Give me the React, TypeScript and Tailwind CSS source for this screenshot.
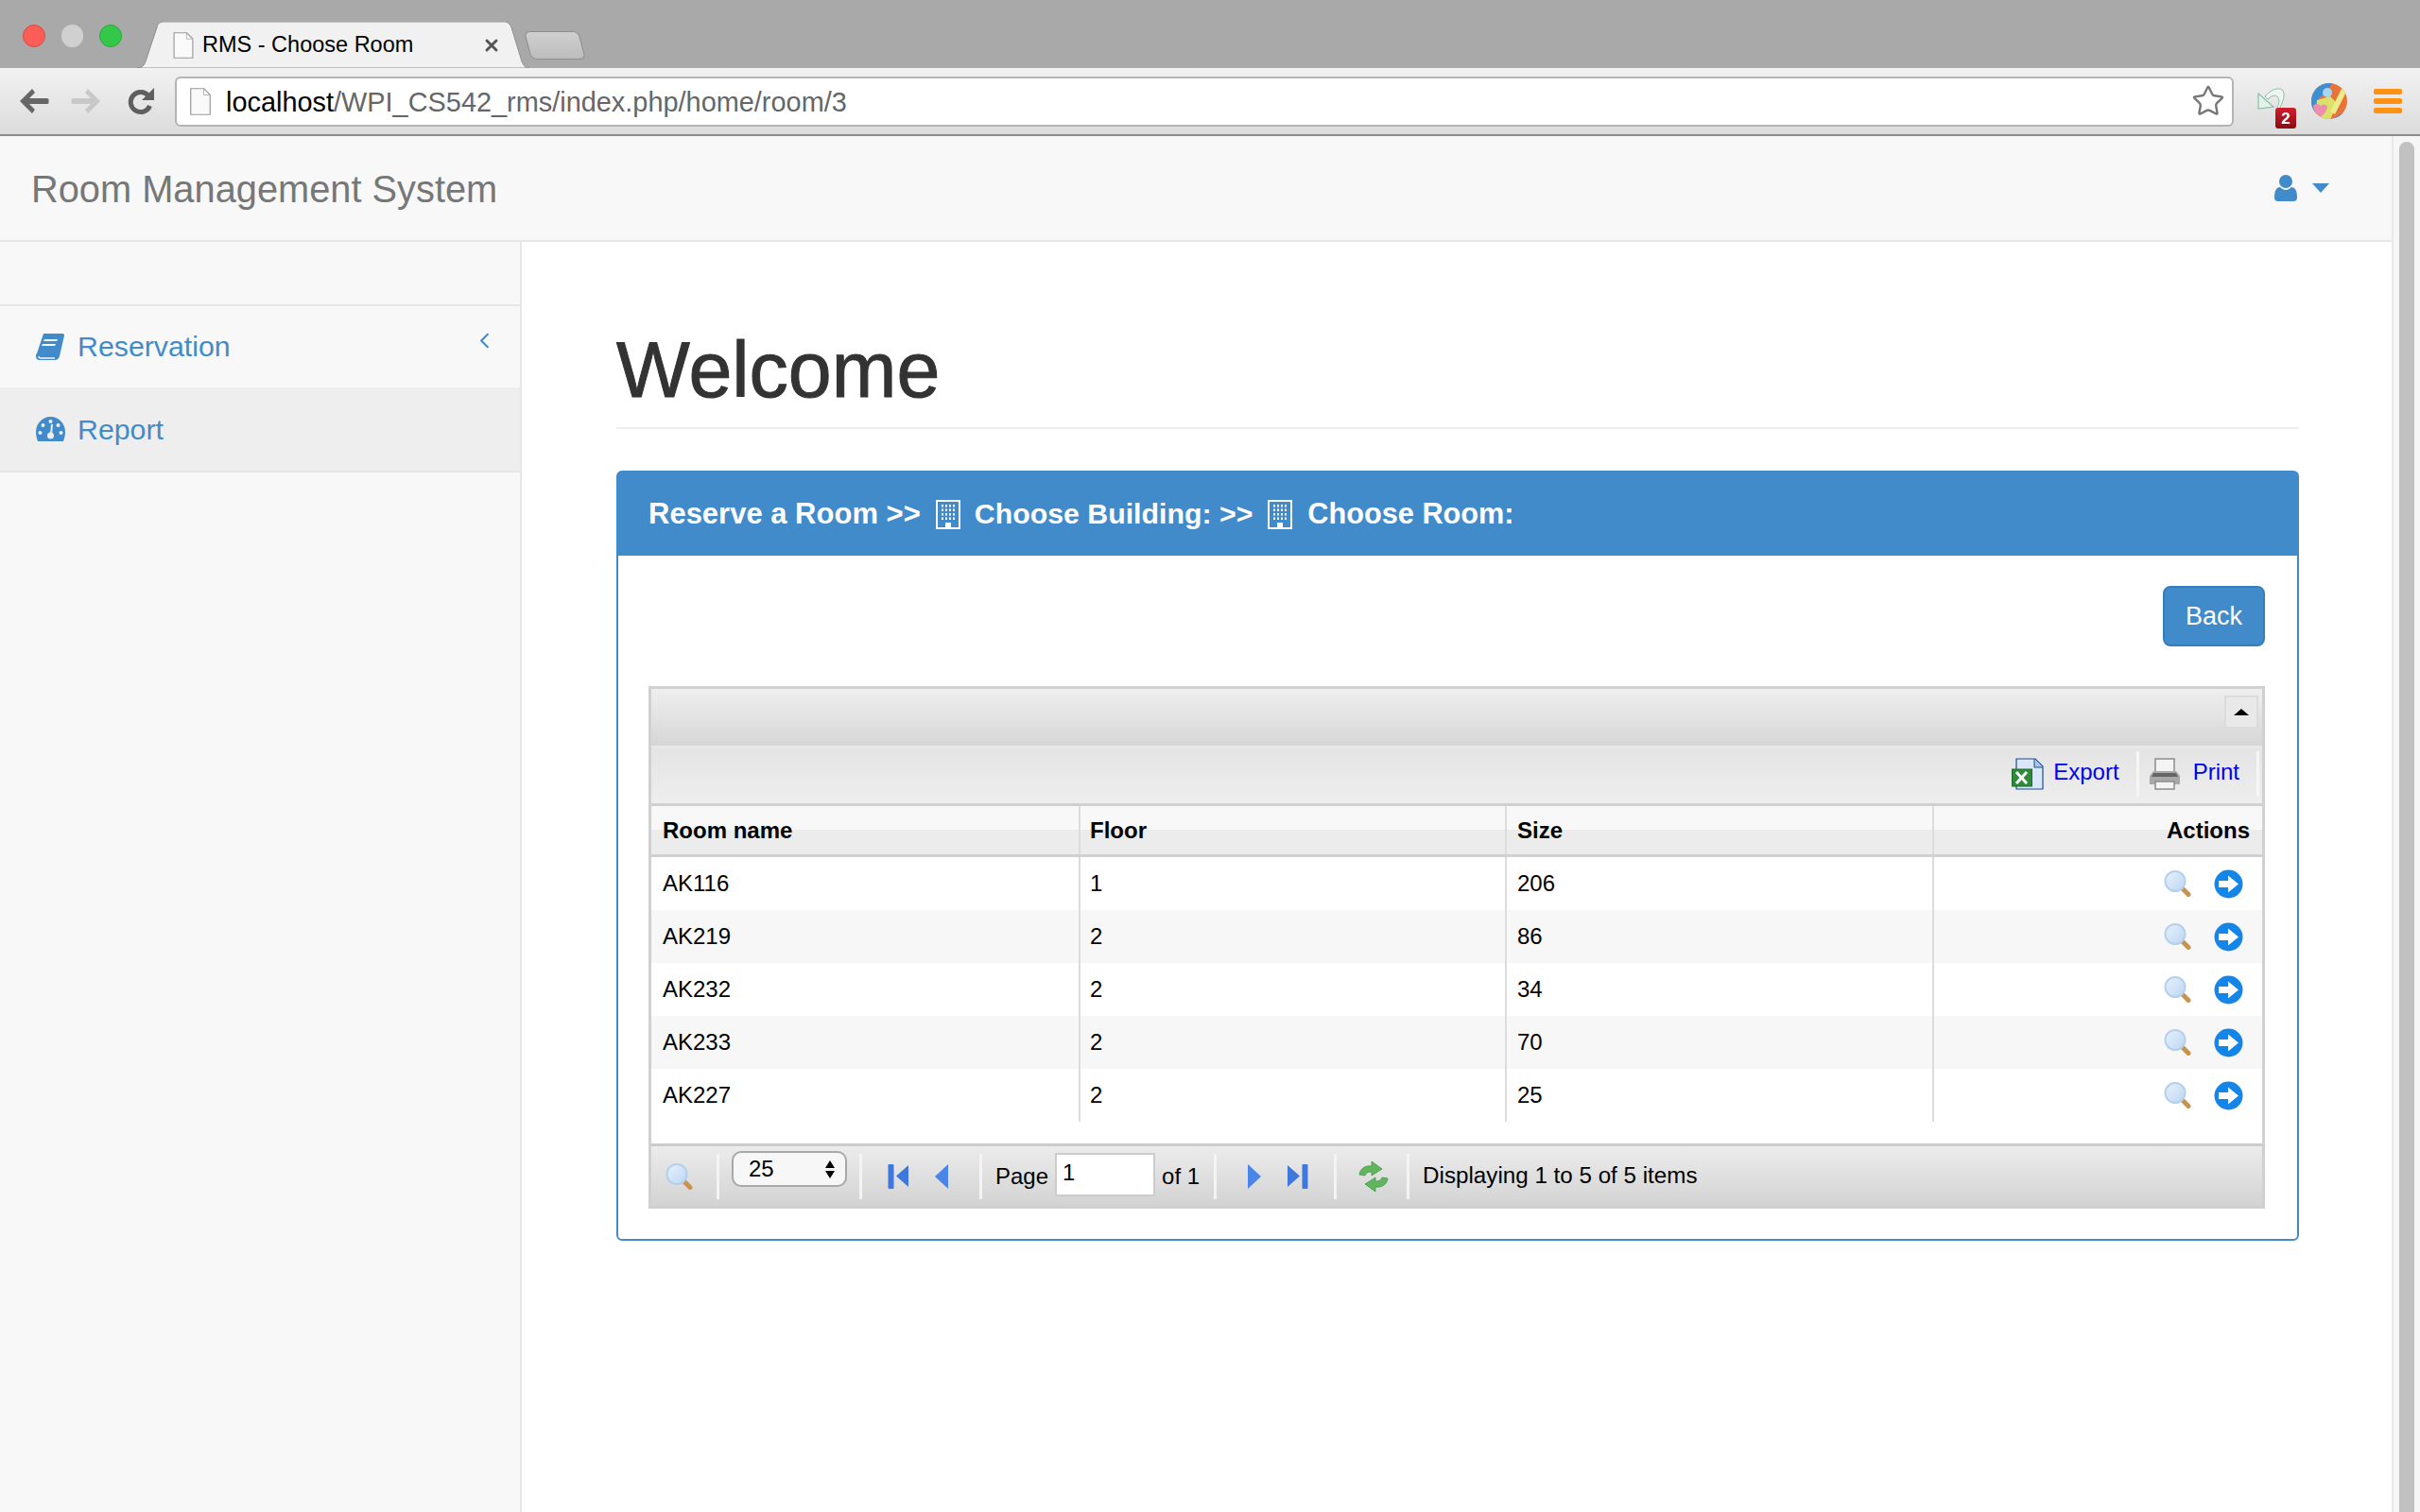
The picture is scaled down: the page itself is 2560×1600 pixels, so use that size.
import { ChevronLeft, Star, X } from 'lucide-react';

const rooms = [
  { name: 'AK116', floor: '1', size: '206' },
  { name: 'AK219', floor: '2', size: '86' },
  { name: 'AK232', floor: '2', size: '34' },
  { name: 'AK233', floor: '2', size: '70' },
  { name: 'AK227', floor: '2', size: '25' },
];

function FileIcon({ className }: { className: string }) {
  return (
    <svg className={className} viewBox="0 0 22 29" fill="none">
      <path d="M.75.75h14l6.5 6.5v21H.75z" fill="#fafafa" stroke="#9a9a9a" strokeWidth="1.2" />
      <path d="M14.5 1v6.5H21" stroke="#b5b5b5" strokeWidth="1" />
    </svg>
  );
}

function NavArrow({ flip, color }: { flip?: boolean; color: string }) {
  return (
    <svg className={`h-[28px] w-[32px] ${flip ? 'scale-x-[-1]' : ''}`} viewBox="0 0 32 28">
      <path d="M14 1 1 14l13 13 3-4-6-6h19a1.5 1.5 0 0 0 1.5-1.5v-3A1.5 1.5 0 0 0 30 11H11l6-6z" fill={color} />
    </svg>
  );
}

function ReloadIcon() {
  return (
    <svg className="h-[30px] w-[29px]" viewBox="0 0 29 30" fill="none">
      <path d="M22 9.500A10.500 10.500 0 1 0 23.500 20" stroke="#5f5f5f" strokeWidth="5" />
      <path d="M28 1v13H15z" fill="#5f5f5f" />
    </svg>
  );
}

function MailBadge() {
  return (
    <div className="relative h-[44px] w-[44px]">
      <svg className="absolute top-[1px] left-0 h-[27px] w-[30px]" viewBox="0 0 30 27" fill="none">
        <path d="M8 9C14 2 22-1 26 2c4 3 2 12-4 22l-2-1c3-6 4-11 1-14-3-2-7 0-10 3z" fill="#eef6f1" stroke="#8dbfa8" strokeWidth="1" />
        <path d="M1 6 17 20 1 22z" fill="#e2f3ea" stroke="#8dbfa8" strokeWidth="1.2" />
      </svg>
      <div className="absolute top-[22px] left-[19px] flex h-[22px] w-[22px] items-center justify-center rounded-[3px] bg-gradient-to-b from-[#d0202c] to-[#8d0a14] text-[17px] leading-none font-bold text-white">
        2
      </div>
    </div>
  );
}

function ColorBall() {
  return (
    <svg className="h-[38px] w-[38px]" viewBox="0 0 38 38">
      <defs>
        <clipPath id="ball"><circle cx="19" cy="19" r="19" /></clipPath>
      </defs>
      <g clipPath="url(#ball)">
        <rect width="38" height="38" fill="#e9743a" />
        <path d="M0 0h22L16 10 8 16 4 38H0z" fill="#3f8fd0" />
        <path d="M6 18 20 14l8 8-8 16H4z" fill="#dbe26a" />
        <path d="M20 30 32 6l5 3-12 24z" fill="#ecec8a" />
        <circle cx="17" cy="10" r="5" fill="#a9d5f2" />
        <path d="M2 24c3-3 6-2 8 0 2-2 6-2 7 1 0 5-5 9-8 12-3-3-7-8-7-13z" fill="#ec8fae" />
        <path d="M24 37 36 30v8z" fill="#3f8fd0" />
      </g>
    </svg>
  );
}

function Magnifier() {
  return (
    <svg className="h-[28px] w-[29px]" viewBox="0 0 29 28">
      <defs>
        <linearGradient id="lens" x1="0" y1="0" x2="1" y2="1">
          <stop offset="0" stopColor="#e8f2fc" />
          <stop offset="1" stopColor="#bcd6f2" />
        </linearGradient>
      </defs>
      <path d="m20 19.500 6 6" stroke="#c8924f" strokeWidth="5" strokeLinecap="round" />
      <circle cx="12" cy="11.500" r="10.500" fill="url(#lens)" stroke="#b4d0ee" strokeWidth="2" />
    </svg>
  );
}

function GoArrow() {
  return (
    <svg className="h-[31px] w-[31px]" viewBox="0 0 31 31">
      <circle cx="15.500" cy="15.500" r="15" fill="#1585e8" />
      <path d="M5 12h10V6.500L26 15.500 15 24.500V19H5z" fill="#fff" />
    </svg>
  );
}

function ExcelIcon() {
  return (
    <svg className="h-[34px] w-[34px]" viewBox="0 0 34 34">
      <path d="M5 1h20l8 8v24H5z" fill="#d9e7f8" stroke="#1f4e8c" strokeWidth="1.2" />
      <path d="M24 1v9h9" fill="#a9c6ea" stroke="#1f4e8c" strokeWidth="1" />
      <rect x="0.500" y="12" width="21" height="18" fill="#2f8a3c" stroke="#1d6b2b" />
      <path d="M5 15 16 27M16 15 5 27" stroke="#fff" strokeWidth="3" />
    </svg>
  );
}

function PrinterIcon() {
  return (
    <svg className="h-[34px] w-[34px]" viewBox="0 0 34 34">
      <rect x="7" y="1" width="20" height="14" fill="#f4f4f4" stroke="#8c8c8c" strokeWidth="1.5" />
      <path d="M5 14h24l4 5v9H1v-9z" fill="#a8a8a8" />
      <path d="M5 16h24l2 4H3z" fill="#666" />
      <rect x="7" y="25" width="20" height="8" fill="#f4f4f4" stroke="#8c8c8c" strokeWidth="1.5" />
    </svg>
  );
}

function BuildingIcon() {
  const dots = [0, 1, 2, 3];
  return (
    <svg className="h-[31px] w-[26px]" viewBox="0 0 26 31">
      <path d="M1 1h24v29H1z" fill="none" stroke="#fff" strokeWidth="2" />
      {dots.map((r) =>
        dots.map((c) => <rect key={`${r}-${c}`} x={6 + c * 4} y={5 + r * 4.5} width="2" height="2.5" fill="#fff" />),
      )}
      <path d="M10 30v-6h6v6z" fill="#fff" />
    </svg>
  );
}

function FirstIcon({ flip }: { flip?: boolean }) {
  return (
    <svg className={`h-[28px] w-[23px] ${flip ? 'scale-x-[-1]' : ''}`} viewBox="0 0 23 28">
      <rect x="0.500" y="1" width="6" height="26" rx="1" fill="#3f78dd" />
      <path d="M22 2v23L9 13.500z" fill="#3f78dd" />
    </svg>
  );
}

function PrevIcon({ flip }: { flip?: boolean }) {
  return (
    <svg className={`h-[26px] w-[14px] ${flip ? 'scale-x-[-1]' : ''}`} viewBox="0 0 14 26">
      <path d="M14 0v26L0 13z" fill="#4a86e8" />
    </svg>
  );
}

function RefreshIcon() {
  return (
    <svg className="h-[34px] w-[34px]" viewBox="0 0 34 34">
      <path d="M2 15C3 8 9 5 15 6V1l11 8-11 7v-4c-4 0-6 1-7 4z" fill="#62b45f" stroke="#3f9a45" strokeWidth="0.800" />
      <path d="M32 19c-1 7-7 10-13 9v5L8 25l11-7v4c4 0 6-1 7-4z" fill="#62b45f" stroke="#3f9a45" strokeWidth="0.800" />
    </svg>
  );
}

function PagerSep() {
  return <div className="h-[48px] w-[3px] shrink-0 bg-[#f4f4f4]" />;
}

function BrowserChrome() {
  return (
    <div className="shrink-0">
      {/* tab strip */}
      <div className="relative flex h-[72px] items-start bg-[#a9a9a9]">
        <div className="mt-[26px] ml-[24px] h-[24px] w-[24px] rounded-full border border-[#d94a42] bg-[#fc5d57]" />
        <div className="mt-[26px] ml-[17px] h-[24px] w-[23px] rounded-full bg-[#d0d0d0]" />
        <div className="mt-[26px] ml-[17px] h-[24px] w-[24px] rounded-full border border-[#2aa83c] bg-[#34c84a]" />
        <div className="relative mt-[23px] ml-[16px] flex h-[49px] w-[415px] items-center">
          <svg className="absolute inset-0 h-full w-full" viewBox="0 0 415 49" fill="none">
            <path d="M0 49c5 0 7-2 9-7L21 6c1-4 3-6 8-6h359c4 0 6 2 8 6l11 36c2 5 4 7 8 7z" fill="#f1f1f1" stroke="#8f8f8f" />
          </svg>
          <FileIcon className="relative ml-[38px] h-[28px] w-[22px]" />
          <span className="relative mt-[1px] ml-[9px] text-[23.5px] leading-none text-black">RMS - Choose Room</span>
          <X className="absolute top-[15px] left-[365px] h-[20px] w-[20px] text-[#555]" strokeWidth={3.5} />
        </div>
        <div className="mt-[33px] -ml-[2px] h-[30px] w-[58px] skew-x-[15deg] rounded-[6px] border border-[#8f8f8f] bg-gradient-to-b from-[#cfcfcf] to-[#bdbdbd]" />
      </div>

      {/* toolbar */}
      <div className="flex h-[72px] items-center border-b-2 border-[#8c8c8c] bg-gradient-to-b from-[#f2f2f2] to-[#dcdcdc]">
        <div className="ml-[20px]"><NavArrow color="#666" /></div>
        <div className="ml-[23px]"><NavArrow flip color="#c8c8c8" /></div>
        <div className="ml-[28px]"><ReloadIcon /></div>
        <div className="ml-[21px] flex h-[53px] w-[2178px] items-center rounded-[6px] border-2 border-[#b4b4b4] bg-white">
          <FileIcon className="ml-[14px] h-[29px] w-[22px]" />
          <span className="mt-[2px] ml-[16px] text-[28.9px] leading-none text-[#666]">
            <span className="text-black">localhost</span>/WPI_CS542_rms/index.php/home/room/3
          </span>
          <Star className="mr-[7px] ml-auto h-[36px] w-[36px] text-[#777]" strokeWidth={1.6} />
        </div>
        <div className="mt-[14px] ml-[25px]"><MailBadge /></div>
        <div className="ml-[13px]"><ColorBall /></div>
        <div className="ml-[28px] flex w-[30px] flex-col gap-[4px]">
          <div className="h-[6px] rounded-[2px] bg-[#ff9112]" />
          <div className="h-[6px] rounded-[2px] bg-[#ff9112]" />
          <div className="h-[6px] rounded-[2px] bg-[#ff9112]" />
        </div>
      </div>
    </div>
  );
}

function Navbar() {
  return (
    <div className="flex h-[112px] shrink-0 items-center border-b-2 border-[#e7e7e7] bg-[#f8f8f8]">
      <span className="mt-[3px] ml-[33px] text-[39.8px] leading-none text-[#777]">Room Management System</span>
      <svg className="ml-auto h-[28px] w-[24px]" viewBox="0 0 24 28">
        <circle cx="12" cy="7" r="7" fill="#428bca" />
        <path d="M0 24c0-7 2-11 6-11 2 2 4 3 6 3s4-1 6-3c4 0 6 4 6 11 0 2-1 4-4 4H4c-3 0-4-2-4-4z" fill="#428bca" />
      </svg>
      <div className="mr-[66px] ml-[16px] h-0 w-0 border-x-[9px] border-t-[10px] border-x-transparent border-t-[#428bca]" />
    </div>
  );
}

function Sidebar() {
  return (
    <div className="w-[552px] shrink-0 border-r-2 border-[#e7e7e7] bg-[#f8f8f8] pt-[66px]">
      <div className="flex h-[88px] items-center border-t-2 border-[#e7e7e7] text-[#428bca]">
        <svg className="ml-[38px] h-[28px] w-[30px]" viewBox="0 0 30 28">
          <path d="M8 0h20c2 0 2 1 2 2l-5 22c-1 2-2 4-5 4H4c-3 0-4-2-4-4 0-1 0-2 1-3zM9 6l-1 2h14l1-2zM7 11l-1 2h14l1-2z" fill="#428bca" fillRule="evenodd" />
          <path d="M3 24c0 1 1 2 2 2h15" stroke="#f8f8f8" strokeWidth="1.5" fill="none" />
        </svg>
        <span className="mt-[1px] ml-[14px] text-[30.3px] leading-none">Reservation</span>
        <ChevronLeft className="mr-[24px] mb-[14px] ml-auto h-[27px] w-[27px]" strokeWidth={1.8} />
      </div>
      <div className="flex h-[90px] items-center border-b-2 border-[#e7e7e7] bg-[#eeeeee] text-[#428bca]">
        <svg className="ml-[38px] h-[26px] w-[31px]" viewBox="0 0 31 26">
          <path d="M15.500 0C7 0 0 7 0 16c0 4 1 7 2 10h27c1-3 2-6 2-10C31 7 24 0 15.500 0z" fill="#428bca" />
          <circle cx="15.500" cy="5" r="2" fill="#eee" />
          <circle cx="7.500" cy="9" r="2" fill="#eee" />
          <circle cx="23.500" cy="9" r="2" fill="#eee" />
          <circle cx="4.500" cy="17" r="2" fill="#eee" />
          <circle cx="26.500" cy="17" r="2" fill="#eee" />
          <path d="M17 8l-1 11" stroke="#eee" strokeWidth="2" />
          <circle cx="15.500" cy="20" r="3.500" fill="#eee" />
        </svg>
        <span className="mt-[2px] ml-[13px] text-[30.3px] leading-none">Report</span>
      </div>
    </div>
  );
}

function RoomGrid() {
  return (
    <div className="flex h-[553px] flex-col border-[3px] border-[#d0d0d0]">
      {/* title bar */}
      <div className="flex h-[63px] shrink-0 items-start justify-end border-b-[3px] border-[#e8e8e8] bg-gradient-to-b from-[#efefef] to-[#d6d6d6] pt-[7px] pr-[4px]">
        <div className="flex h-[35px] w-[36px] items-center justify-center border-2 border-[#dcdcdc] bg-[#e9e9e9]">
          <div className="h-0 w-0 border-x-[8px] border-b-[7px] border-x-transparent border-b-black" />
        </div>
      </div>

      {/* toolbar */}
      <div className="flex h-[61px] shrink-0 items-center justify-end border-b-[3px] border-[#d0d0d0] bg-gradient-to-b from-[#e4e4e4] to-[#eeeeee] pr-[3px] pb-[4px]">
        <ExcelIcon />
        <span className="mb-[4px] ml-[10px] text-[24px] leading-none text-[#0000ee]">Export</span>
        <div className="ml-[18px] h-[48px] w-[3px] bg-[#f6f6f6]" />
        <div className="ml-[10px]"><PrinterIcon /></div>
        <span className="mb-[4px] ml-[13px] text-[24px] leading-none text-[#0000ee]">Print</span>
        <div className="ml-[18px] h-[48px] w-[3px] bg-[#f6f6f6]" />
      </div>

      {/* column headers */}
      <div className="grid h-[54px] shrink-0 grid-cols-[454px_451px_452px_1fr] border-b-[3px] border-[#d0d0d0] bg-gradient-to-b from-[#f8f8f8] from-50% to-[#ececec] to-50% text-[24px] font-bold text-black">
        <div className="flex items-center border-r-2 border-[#dcdcdc] pl-[12px]">Room name</div>
        <div className="flex items-center border-r-2 border-[#dcdcdc] pl-[10px]">Floor</div>
        <div className="flex items-center border-r-2 border-[#dcdcdc] pl-[11px]">Size</div>
        <div className="flex items-center justify-end pr-[13px]">Actions</div>
      </div>

      {/* rows */}
      <div className="flex-1 bg-white">
        {rooms.map((room, i) => (
          <div
            key={room.name}
            className={`grid h-[56px] grid-cols-[454px_451px_452px_1fr] text-[24px] text-black ${i % 2 === 1 ? 'bg-[#f7f7f7]' : 'bg-white'}`}
          >
            <div className="flex items-center border-r-2 border-[#dcdcdc] pl-[12px]">{room.name}</div>
            <div className="flex items-center border-r-2 border-[#dcdcdc] pl-[10px]">{room.floor}</div>
            <div className="flex items-center border-r-2 border-[#dcdcdc] pl-[11px]">{room.size}</div>
            <div className="flex items-center justify-end pr-[20px]">
              <Magnifier />
              <div className="ml-[24px]"><GoArrow /></div>
            </div>
          </div>
        ))}
      </div>

      {/* pager */}
      <div className="flex h-[66px] shrink-0 items-center border-t-[3px] border-[#cccccc] bg-gradient-to-b from-[#ececec] to-[#d3d3d3] text-[24px] text-black">
        <div className="ml-[15px]"><Magnifier /></div>
        <div className="ml-[25px]"><PagerSep /></div>
        <div className="mb-[15px] ml-[13px] flex h-[38px] w-[122px] items-center rounded-[10px] border-2 border-[#a8a8a8] bg-[#f7f7f7] pl-[16px] text-[24px]">
          25
          <div className="mr-[11px] ml-auto flex flex-col gap-[3px]">
            <div className="h-0 w-0 border-x-[5.500px] border-b-[8px] border-x-transparent border-b-black" />
            <div className="h-0 w-0 border-x-[5.500px] border-t-[8px] border-x-transparent border-t-black" />
          </div>
        </div>
        <div className="ml-[13px]"><PagerSep /></div>
        <div className="ml-[27px]"><FirstIcon /></div>
        <div className="ml-[27px]"><PrevIcon /></div>
        <div className="ml-[33px]"><PagerSep /></div>
        <span className="ml-[14px]">Page</span>
        <div className="mb-[3px] ml-[7px] flex h-[46px] w-[106px] items-start border-2 border-[#cccccc] bg-white pt-[1px] pl-[6px]">1</div>
        <span className="ml-[7px]">of 1</span>
        <div className="ml-[15px]"><PagerSep /></div>
        <div className="ml-[33px]"><PrevIcon flip /></div>
        <div className="ml-[27px]"><FirstIcon flip /></div>
        <div className="ml-[27px]"><PagerSep /></div>
        <div className="ml-[22px]"><RefreshIcon /></div>
        <div className="ml-[18px]"><PagerSep /></div>
        <span className="ml-[14px] text-[24.2px]">Displaying 1 to 5 of 5 items</span>
      </div>
    </div>
  );
}

function MainContent() {
  return (
    <div className="flex-1 bg-white pr-[98px] pl-[100px]">
      <div className="flex h-[198px] items-end border-b-2 border-[#eeeeee] pb-[20px]">
        <h1 className="text-[82.5px] leading-none font-normal text-[#333] [-webkit-text-stroke:1px_#333]">Welcome</h1>
      </div>
      <div className="mt-[44px] h-[815px] rounded-[6px] border-2 border-[#428bca] bg-white">
        <div className="flex h-[88px] items-center bg-[#428bca] pl-[32px] text-[30.5px] font-bold text-white">
          <span className="text-[31px]">Reserve a Room &gt;&gt;</span>
          <div className="ml-[16px]"><BuildingIcon /></div>
          <span className="ml-[15px] text-[30.3px]">Choose Building: &gt;&gt;</span>
          <div className="ml-[16px]"><BuildingIcon /></div>
          <span className="ml-[16px] text-[30.7px]">Choose Room:</span>
        </div>
        <div className="pt-[32px] pr-[34px] pl-[32px]">
          <div className="flex justify-end">
            <button className="flex h-[64px] w-[108px] items-center justify-center rounded-[8px] border-2 border-[#357ebd] bg-[#428bca] text-[27px] text-white">
              Back
            </button>
          </div>
          <div className="mt-[42px]"><RoomGrid /></div>
        </div>
      </div>
    </div>
  );
}

export default function App() {
  return (
    <div className="flex h-[1600px] w-[2560px] flex-col overflow-hidden bg-white font-['Liberation_Sans',Arial,sans-serif]">
      <BrowserChrome />
      <div className="flex min-h-0 flex-1">
        <div className="flex min-w-0 flex-1 flex-col">
          <Navbar />
          <div className="flex min-h-0 flex-1">
            <Sidebar />
            <MainContent />
          </div>
        </div>
        {/* page scrollbar */}
        <div className="w-[30px] shrink-0 border-l-2 border-[#e8e8e8] bg-[#f6f6f6] pt-[6px] pl-[6px]">
          <div className="h-full w-[16px] rounded-t-full bg-[#c1c1c1]" />
        </div>
      </div>
    </div>
  );
}
